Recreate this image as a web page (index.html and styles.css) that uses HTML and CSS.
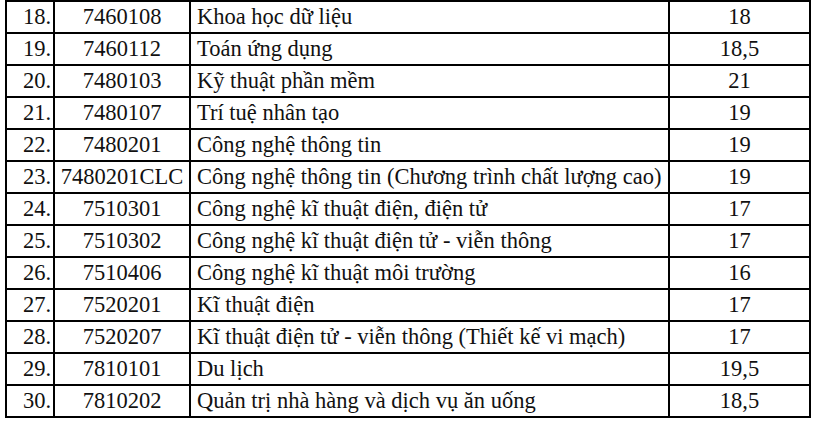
FILE: index.html
```html
<!DOCTYPE html>
<html>
<head>
<meta charset="utf-8">
<link rel="stylesheet" href="styles.css">
</head>
<body>
<table class="grid">
<colgroup><col class="c-no"><col class="c-code"><col class="c-name"><col class="c-score"></colgroup>
<tr><td class="no">18.</td><td class="code">7460108</td><td class="name">Khoa học dữ liệu</td><td class="score">18</td></tr>
<tr><td class="no">19.</td><td class="code">7460112</td><td class="name">Toán ứng dụng</td><td class="score">18,5</td></tr>
<tr><td class="no">20.</td><td class="code">7480103</td><td class="name">Kỹ thuật phần mềm</td><td class="score">21</td></tr>
<tr><td class="no">21.</td><td class="code">7480107</td><td class="name">Trí tuệ nhân tạo</td><td class="score">19</td></tr>
<tr><td class="no">22.</td><td class="code">7480201</td><td class="name">Công nghệ thông tin</td><td class="score">19</td></tr>
<tr><td class="no">23.</td><td class="code">7480201CLC</td><td class="name">Công nghệ thông tin (Chương trình chất lượng cao)</td><td class="score">19</td></tr>
<tr><td class="no">24.</td><td class="code">7510301</td><td class="name">Công nghệ kĩ thuật điện, điện tử</td><td class="score">17</td></tr>
<tr><td class="no">25.</td><td class="code">7510302</td><td class="name">Công nghệ kĩ thuật điện tử - viễn thông</td><td class="score">17</td></tr>
<tr><td class="no">26.</td><td class="code">7510406</td><td class="name">Công nghệ kĩ thuật môi trường</td><td class="score">16</td></tr>
<tr><td class="no">27.</td><td class="code">7520201</td><td class="name">Kĩ thuật điện</td><td class="score">17</td></tr>
<tr><td class="no">28.</td><td class="code">7520207</td><td class="name">Kĩ thuật điện tử - viễn thông (Thiết kế vi mạch)</td><td class="score">17</td></tr>
<tr><td class="no">29.</td><td class="code">7810101</td><td class="name">Du lịch</td><td class="score">19,5</td></tr>
<tr><td class="no">30.</td><td class="code">7810202</td><td class="name">Quản trị nhà hàng và dịch vụ ăn uống</td><td class="score">18,5</td></tr>
</table>
</body>
</html>
```
FILE: styles.css
```css
html, body {
  margin: 0;
  padding: 0;
  background: #ffffff;
}
.grid {
  margin: 0 0 0 5px;
  border-collapse: collapse;
  table-layout: fixed;
  width: 804px;
  font-family: "Liberation Serif", "Times New Roman", serif;
  font-size: 22.5px;
  color: #111;
}
.c-no { width: 48px; }
.c-code { width: 136px; }
.c-name { width: 479px; }
.c-score { width: 141px; }
.grid td {
  border: 2px solid #000;
  height: 30px;
  padding: 0;
  white-space: nowrap;
  overflow: hidden;
  box-sizing: border-box;
  line-height: 30px;
}
.grid tr { height: 32px; }
.no { text-align: right; padding-right: 2px !important; }
.code { text-align: center; }
.name { text-align: left; padding-left: 6px !important; }
.score { text-align: center; }
```
